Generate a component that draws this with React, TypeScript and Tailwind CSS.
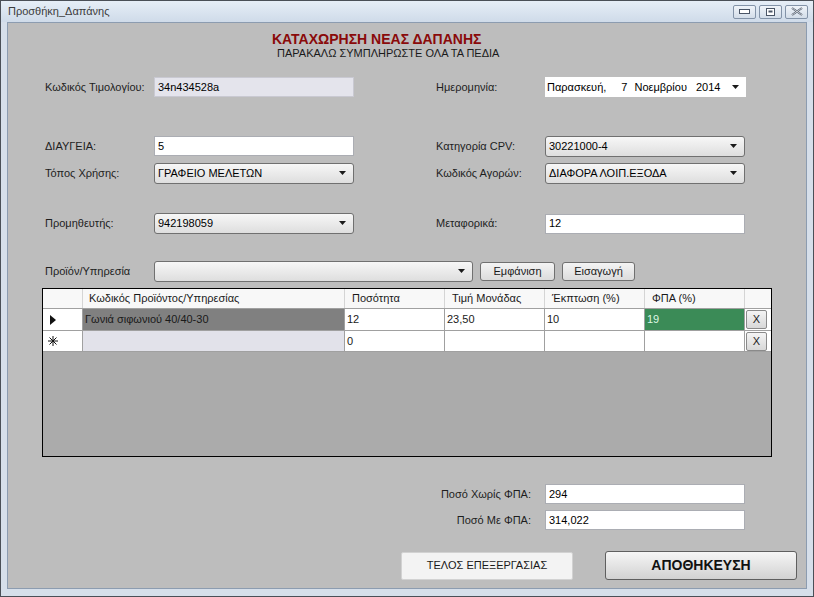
import React from 'react';

const font = { fontFamily: '"Liberation Sans", Arial, sans-serif' };

function Arrow() {
  return (
    <svg width="8" height="5" viewBox="0 0 8 5" className="shrink-0">
      <path d="M0 0 H7 L3.5 4 Z" fill="#1a1a1a" />
    </svg>
  );
}

function Label({ text, w = 109 }: { text: string; w?: number }) {
  return (
    <span className="text-[11px] text-[#1e1e1e] shrink-0" style={{ width: w }}>
      {text}
    </span>
  );
}

function TextBox({ value, tinted }: { value: string; tinted?: boolean }) {
  return (
    <div
      className={`w-[200px] h-[20px] border border-[#abadb3] flex items-center px-[3px] text-[11px] text-black ${
        tinted ? 'bg-[#e4e4ec] border-[#c9c9d2]' : 'bg-white'
      }`}
    >
      {value}
    </div>
  );
}

function Combo({ value, w = 200 }: { value: string; w?: number }) {
  return (
    <div
      className="h-[21px] rounded-[3px] border border-[#707070] bg-linear-to-b from-[#f7f7f7] to-[#dedede] flex items-center pl-[3px] pr-[6px] text-[11px] text-black"
      style={{ width: w }}
    >
      <span className="flex-1">{value}</span>
      <Arrow />
    </div>
  );
}

function WinButton({ children }: { children: React.ReactNode }) {
  return (
    <div className="w-[23px] h-[14px] rounded-[2px] border border-[#8393a8] bg-linear-to-b from-[#f0f4f9] to-[#d3dde9] flex items-center justify-center">
      {children}
    </div>
  );
}

function XButton() {
  return (
    <div className="w-[21px] h-[19px] rounded-[2px] border border-[#8a8a8a] bg-linear-to-b from-[#f4f4f4] to-[#d8d8d8] flex items-center justify-center text-[11px] text-[#222]">
      X
    </div>
  );
}

const cols = [
  { title: 'Ποσότητα', w: 100 },
  { title: 'Τιμή Μονάδας', w: 100 },
  { title: 'Έκπτωση (%)', w: 100 },
  { title: 'ΦΠΑ (%)', w: 100 },
];

export default function App() {
  return (
    <div
      className="w-[814px] h-[597px] bg-[#d6dfea] border border-[#4a4f57] flex flex-col overflow-hidden"
      style={font}
    >
      {/* title bar */}
      <div className="h-[21px] flex items-center bg-linear-to-b from-[#e6eef7] to-[#cfdbe9] shrink-0">
        <span className="ml-[7px] text-[11px] text-[#3c3c3c]">Προσθήκη_Δαπάνης</span>
        <div className="ml-auto mr-[5px] flex gap-[3px] items-center">
          <WinButton>
            <svg width="11" height="6" viewBox="0 0 11 6">
              <rect x="0.5" y="0.5" width="10" height="4" fill="white" stroke="#4a5566" />
            </svg>
          </WinButton>
          <WinButton>
            <svg width="9" height="8" viewBox="0 0 9 8">
              <rect x="0.5" y="0.5" width="8" height="7" fill="white" stroke="#4a5566" />
              <rect x="2.5" y="2.5" width="4" height="2" fill="#4a5566" />
            </svg>
          </WinButton>
          <WinButton>
            <svg width="12" height="9" viewBox="0 0 12 9">
              <path d="M1 1 L11 8 M11 1 L1 8" stroke="#4a5566" strokeWidth="2" />
              <path d="M1 1 L11 8 M11 1 L1 8" stroke="white" strokeWidth="0.7" />
            </svg>
          </WinButton>
        </div>
      </div>

      {/* body */}
      <div className="flex-1 mx-[6px] mb-[7px] bg-[#bdbdbd] border border-[#8c9cb0] flex flex-col">
        <div className="mt-[8px] flex flex-col">
          <div className="ml-[264px] h-[16px] text-[14px] leading-[16px] font-bold text-[#8a0a0a]">
            ΚΑΤΑΧΩΡΗΣΗ ΝΕΑΣ ΔΑΠΑΝΗΣ
          </div>
          <div className="ml-[269px] h-[13px] text-[11px] leading-[13px] text-[#1a1a1a]">
            ΠΑΡΑΚΑΛΩ ΣΥΜΠΛΗΡΩΣΤΕ ΟΛΑ ΤΑ ΠΕΔΙΑ
          </div>
        </div>

        {/* row 1 */}
        <div className="mt-[17px] h-[20px] flex items-center pl-[37px]">
          <Label text="Κωδικός Τιμολογίου:" />
          <TextBox value="34n434528a" tinted />
          <div className="w-[82px]" />
          <Label text="Ημερομηνία:" />
          <div className="w-[201px] h-[20px] bg-white flex items-center pl-[2px] pr-[6px] text-[11px] text-black">
            <span>Παρασκευή,</span>
            <span className="ml-[15px]">7</span>
            <span className="ml-[7px]">Νοεμβρίου</span>
            <span className="ml-[9px]">2014</span>
            <span className="flex-1" />
            <Arrow />
          </div>
        </div>

        {/* row 2 */}
        <div className="mt-[39px] h-[20px] flex items-center pl-[37px]">
          <Label text="ΔΙΑΥΓΕΙΑ:" />
          <TextBox value="5" />
          <div className="w-[82px]" />
          <Label text="Κατηγορία CPV:" />
          <Combo value="30221000-4" />
        </div>

        {/* row 3 */}
        <div className="mt-[7px] h-[21px] flex items-center pl-[37px]">
          <Label text="Τόπος Χρήσης:" />
          <Combo value="ΓΡΑΦΕΙΟ ΜΕΛΕΤΩΝ" />
          <div className="w-[82px]" />
          <Label text="Κωδικός Αγορών:" />
          <Combo value="ΔΙΑΦΟΡΑ ΛΟΙΠ.ΕΞΟΔΑ" />
        </div>

        {/* row 4 */}
        <div className="mt-[29px] h-[21px] flex items-center pl-[37px]">
          <Label text="Προμηθευτής:" />
          <Combo value="942198059" />
          <div className="w-[82px]" />
          <Label text="Μεταφορικά:" />
          <TextBox value="12" />
        </div>

        {/* product row */}
        <div className="mt-[27px] h-[20px] flex items-center pl-[37px]">
          <Label text="Προϊόν/Υπηρεσία" />
          <Combo value="" w={319} />
          <div className="ml-[7px] w-[75px] h-[19px] rounded-[3px] border border-[#707070] bg-linear-to-b from-[#f4f4f4] to-[#dcdcdc] flex items-center justify-center text-[11px] text-[#1a1a1a]">
            Εμφάνιση
          </div>
          <div className="ml-[7px] w-[73px] h-[19px] rounded-[3px] border border-[#707070] bg-linear-to-b from-[#f4f4f4] to-[#dcdcdc] flex items-center justify-center text-[11px] text-[#1a1a1a]">
            Εισαγωγή
          </div>
        </div>

        {/* grid */}
        <div className="mt-[7px] ml-[34px] w-[730px] h-[169px] border border-black bg-[#ababab] flex flex-col text-[11px] text-[#1a1a1a]">
          {/* header */}
          <div className="h-[20px] flex bg-[#f8f8f8] border-b border-[#a0a0a0]">
            <div className="w-[40px] border-r border-[#d5d5d5]" />
            <div className="w-[262px] pl-[6px] flex items-center border-r border-[#d5d5d5]">
              Κωδικός Προϊόντος/Υπηρεσίας
            </div>
            {cols.map((c) => (
              <div
                key={c.title}
                className="pl-[7px] flex items-center border-r border-[#d5d5d5]"
                style={{ width: c.w }}
              >
                {c.title}
              </div>
            ))}
            <div className="flex-1" />
          </div>

          {/* row 1 */}
          <div className="h-[22px] flex border-b border-[#a0a0a0]">
            <div className="w-[40px] bg-white border-r border-[#a0a0a0] flex items-center pl-[7px]">
              <svg width="6" height="10" viewBox="0 0 6 10">
                <path d="M0 0 L6 5 L0 10 Z" fill="#111" />
              </svg>
            </div>
            <div className="w-[262px] bg-[#808080] border-r border-[#a0a0a0] flex items-center pl-[2px] text-[#1a1a1a]">
              Γωνιά σιφωνιού 40/40-30
            </div>
            <div className="w-[100px] bg-white border-r border-[#a0a0a0] flex items-center pl-[2px]">12</div>
            <div className="w-[100px] bg-white border-r border-[#a0a0a0] flex items-center pl-[2px]">23,50</div>
            <div className="w-[100px] bg-white border-r border-[#a0a0a0] flex items-center pl-[2px]">10</div>
            <div className="w-[100px] bg-[#3b8b57] border-r border-[#a0a0a0] flex items-center pl-[2px] text-[#dff7e4]">19</div>
            <div className="flex-1 bg-white flex items-center pl-[1px]">
              <XButton />
            </div>
          </div>

          {/* new row */}
          <div className="h-[21px] flex border-b border-[#a0a0a0]">
            <div className="w-[40px] bg-white border-r border-[#a0a0a0] flex items-center pl-[5px]">
              <svg width="10" height="10" viewBox="0 0 10 10">
                <path d="M5 0 V10 M0 5 H10 M1.5 1.5 L8.5 8.5 M8.5 1.5 L1.5 8.5" stroke="#111" strokeWidth="1" />
              </svg>
            </div>
            <div className="w-[262px] bg-[#e2e2ea] border-r border-[#a0a0a0]" />
            <div className="w-[100px] bg-white border-r border-[#a0a0a0] flex items-center pl-[2px]">0</div>
            <div className="w-[100px] bg-white border-r border-[#a0a0a0]" />
            <div className="w-[100px] bg-white border-r border-[#a0a0a0]" />
            <div className="w-[100px] bg-white border-r border-[#a0a0a0]" />
            <div className="flex-1 bg-white flex items-center pl-[1px]">
              <XButton />
            </div>
          </div>
        </div>

        {/* totals */}
        <div className="mt-[27px] h-[20px] flex items-center pl-[392px]">
          <span className="w-[131px] text-right text-[11px] text-[#1e1e1e]">Ποσό Χωρίς ΦΠΑ:</span>
          <div className="ml-[14px]">
            <TextBox value="294" />
          </div>
        </div>
        <div className="mt-[6px] h-[20px] flex items-center pl-[392px]">
          <span className="w-[131px] text-right text-[11px] text-[#1e1e1e]">Ποσό Με ΦΠΑ:</span>
          <div className="ml-[14px]">
            <TextBox value="314,022" />
          </div>
        </div>

        {/* buttons */}
        <div className="mt-[21px] flex items-center pl-[393px]">
          <div className="w-[172px] h-[28px] rounded-[2px] border border-[#d2d2d2] bg-[#f3f3f3] flex items-center justify-center text-[11px] text-[#1a1a1a]">
            ΤΕΛΟΣ ΕΠΕΞΕΡΓΑΣΙΑΣ
          </div>
          <div className="ml-[32px] w-[192px] h-[29px] rounded-[3px] border border-[#5f5f5f] bg-linear-to-b from-[#f6f6f6] to-[#d2d2d2] flex items-center justify-center text-[14px] font-bold text-[#111]">
            ΑΠΟΘΗΚΕΥΣΗ
          </div>
        </div>
      </div>
    </div>
  );
}
